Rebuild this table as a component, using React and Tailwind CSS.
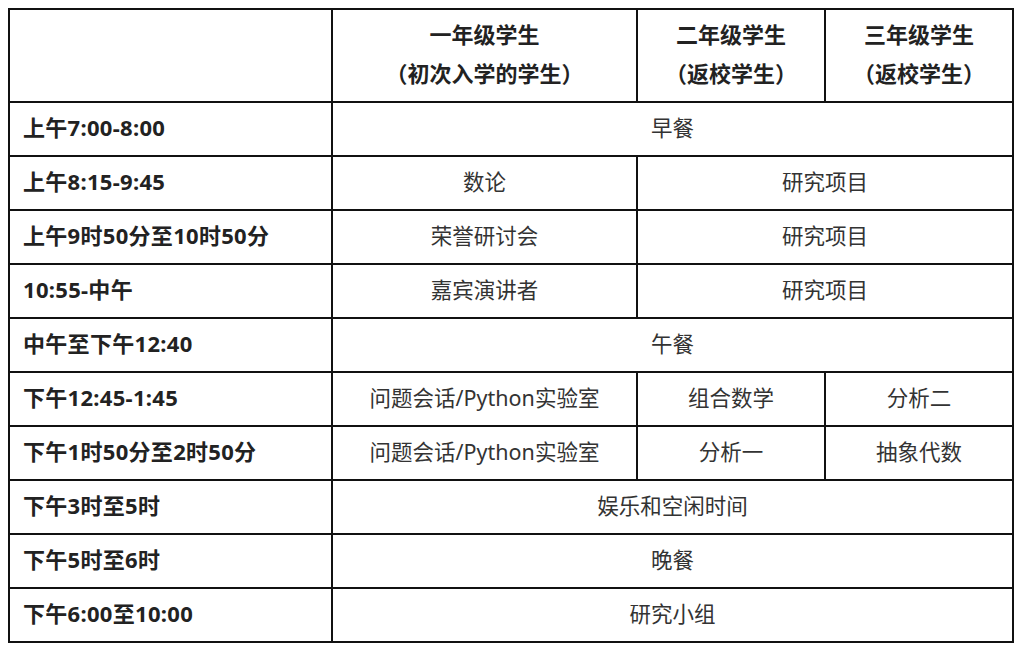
const rows = [
  { time: '上午7:00-8:00', cells: [{ text: '早餐', span: 3 }] },
  { time: '上午8:15-9:45', cells: [{ text: '数论' }, { text: '研究项目', span: 2 }] },
  { time: '上午9时50分至10时50分', cells: [{ text: '荣誉研讨会' }, { text: '研究项目', span: 2 }] },
  { time: '10:55-中午', cells: [{ text: '嘉宾演讲者' }, { text: '研究项目', span: 2 }] },
  { time: '中午至下午12:40', cells: [{ text: '午餐', span: 3 }] },
  {
    time: '下午12:45-1:45',
    cells: [{ text: '问题会话/Python实验室' }, { text: '组合数学' }, { text: '分析二' }],
  },
  {
    time: '下午1时50分至2时50分',
    cells: [{ text: '问题会话/Python实验室' }, { text: '分析一' }, { text: '抽象代数' }],
  },
  { time: '下午3时至5时', cells: [{ text: '娱乐和空闲时间', span: 3 }] },
  { time: '下午5时至6时', cells: [{ text: '晚餐', span: 3 }] },
  { time: '下午6:00至10:00', cells: [{ text: '研究小组', span: 3 }] },
];

const headers = [
  ['一年级学生', '（初次入学的学生）'],
  ['二年级学生', '（返校学生）'],
  ['三年级学生', '（返校学生）'],
];

export default function App() {
  return (
    <div
      className="min-h-screen bg-white pl-[8px] pt-[8px]"
      style={{ fontFamily: '"Noto Sans", "Noto Sans CJK SC", sans-serif' }}
    >
      <table className="w-[1004px] table-fixed border-collapse text-[21.5px] text-[#333]">
        <colgroup>
          <col className="w-[323px]" />
          <col className="w-[305px]" />
          <col className="w-[188px]" />
          <col className="w-[188px]" />
        </colgroup>
        <thead>
          <tr className="h-[93px]">
            <th className="border-2 border-[#111]" />
            {headers.map(([a, b]) => (
              <th
                key={a}
                className="border-2 border-[#111] pb-[3px] text-center text-[22px] font-bold leading-[39px] text-[#222]"
              >
                <div>{a}</div>
                <div>{b}</div>
              </th>
            ))}
          </tr>
        </thead>
        <tbody>
          {rows.map((row) => (
            <tr key={row.time} className="h-[54px]">
              <td className="border-2 border-[#111] px-[13px] pb-[3px] text-left text-[22px] font-bold tracking-[0.3px] text-[#222]">
                {row.time}
              </td>
              {row.cells.map((c, i) => (
                <td
                  key={i}
                  colSpan={c.span || 1}
                  className="border-2 border-[#111] pb-[2px] text-center"
                >
                  {c.text}
                </td>
              ))}
            </tr>
          ))}
        </tbody>
      </table>
    </div>
  );
}
